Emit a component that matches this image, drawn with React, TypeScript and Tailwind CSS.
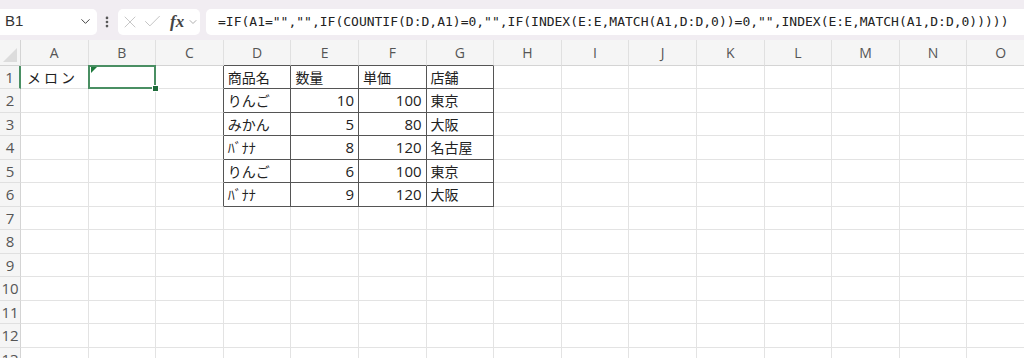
import React from 'react';
import { ChevronDown, EllipsisVertical, X, Check } from 'lucide-react';

const COLS = ['A', 'B', 'C', 'D', 'E', 'F', 'G', 'H', 'I', 'J', 'K', 'L', 'M', 'N', 'O'];
const ROWS = [1, 2, 3, 4, 5, 6, 7, 8, 9, 10, 11, 12, 13];

const FORMULA = '=IF(A1="","",IF(COUNTIF(D:D,A1)=0,"",IF(INDEX(E:E,MATCH(A1,D:D,0))=0,"",INDEX(E:E,MATCH(A1,D:D,0)))))';

// values keyed by "col+row"
const cells: Record<string, { v: string; right?: boolean }> = {
    A1: { v: 'メロン' },
    D1: { v: '商品名' }, E1: { v: '数量' }, F1: { v: '単価' }, G1: { v: '店舗' },
    D2: { v: 'りんご' }, E2: { v: '10', right: true }, F2: { v: '100', right: true }, G2: { v: '東京' },
    D3: { v: 'みかん' }, E3: { v: '5', right: true }, F3: { v: '80', right: true }, G3: { v: '大阪' },
    D4: { v: 'ﾊﾞﾅﾅ' }, E4: { v: '8', right: true }, F4: { v: '120', right: true }, G4: { v: '名古屋' },
    D5: { v: 'りんご' }, E5: { v: '6', right: true }, F5: { v: '100', right: true }, G5: { v: '東京' },
    D6: { v: 'ﾊﾞﾅﾅ' }, E6: { v: '9', right: true }, F6: { v: '120', right: true }, G6: { v: '大阪' },
};

const inTable = (c: string, r: number) => ['D', 'E', 'F', 'G'].includes(c) && r >= 1 && r <= 6;

export default function App() {
    return (
        <div className="w-[1024px] h-[358px] overflow-hidden bg-white text-[#222]" style={{ fontFamily: '"Noto Sans CJK JP", "Noto Sans", sans-serif' }}>
            {/* formula bar */}
            <div className="h-[40px] bg-[#f1edf2] flex items-center pt-[4px] pb-[1px]">
                <div className="w-[97px] h-[26px] bg-white rounded-r-[5px] flex items-center justify-between pl-[5px] pr-[4px]">
                    <span className="text-[15px] text-[#333]" style={{ fontFamily: '"Liberation Sans", sans-serif' }}>B1</span>
                    <ChevronDown className="w-[15px] h-[15px] text-[#444]" strokeWidth={1.6} />
                </div>
                <EllipsisVertical className="w-[14px] h-[14px] text-[#555] ml-[3px]" strokeWidth={2.6} />
                <div className="w-[82px] h-[26px] bg-white rounded-[5px] flex items-center pl-[2px] ml-[4px]">
                    <X className="w-[20px] h-[20px] text-[#c2c2c2]" strokeWidth={1.1} />
                    <Check className="w-[21px] h-[21px] text-[#c2c2c2] ml-[2px]" strokeWidth={1.1} />
                    <span className="italic font-bold text-[17px] text-[#444] leading-none ml-[7px]" style={{ fontFamily: '"Liberation Serif", serif' }}>fx</span>
                    <ChevronDown className="w-[12px] h-[12px] text-[#999] ml-[3px]" strokeWidth={1.6} />
                </div>
                <div className="flex-1 h-[26px] bg-white rounded-l-[5px] flex items-center pl-[12px] ml-[6px] overflow-hidden whitespace-nowrap">
                    <span className="text-[13px] text-[#222]" style={{ fontFamily: '"DejaVu Sans Mono", "Liberation Mono", monospace' }}>{FORMULA}</span>
                </div>
            </div>

            {/* grid */}
            <div className="grid grid-cols-[21px_repeat(15,67.6px)]">
                {/* header row */}
                <div className="h-[26px] bg-[#f5f5f5] border-b border-r border-[#d4d4d4] relative overflow-hidden">
                    <svg className="absolute right-[3px] bottom-[3px]" width="14" height="14" viewBox="0 0 14 14">
                        <polygon points="14,0 14,14 0,14" fill="#dcdcdc" />
                    </svg>
                </div>
                {COLS.map(c => (
                    <div
                        key={c}
                        className={`h-[26px] bg-[#f5f5f5] border-r border-[#e0e0e0] flex items-center justify-center text-[14px] text-[#555] ${inTable(c, 1) ? 'border-b border-b-[#555]' : 'border-b border-b-[#d4d4d4]'}`}
                        style={{ fontFamily: '"Open Sans", "Noto Sans", sans-serif' }}
                    >
                        {c}
                    </div>
                ))}

                {ROWS.map(r => (
                    <React.Fragment key={r}>
                        <div
                            className={`${r % 2 === 1 ? 'h-[23px]' : 'h-[24px]'} bg-[#f5f5f5] border-b border-[#e0e0e0] flex items-center justify-center text-[15px] text-[#555] ${r === 1 ? 'border-r-2 border-r-[#4a8f63]' : 'border-r border-r-[#d4d4d4]'}`}
                            style={{ fontFamily: '"Open Sans", "Noto Sans", sans-serif' }}
                        >
                            {r}
                        </div>
                        {COLS.map(c => {
                            const key = `${c}${r}`;
                            const cell = cells[key];
                            const t = inTable(c, r);
                            const leftOfTable = c === 'C' && r >= 1 && r <= 6;
                            const rb = t || leftOfTable ? 'border-r-[#555]' : 'border-r-[#e3e3e3]';
                            const bb = t ? 'border-b-[#555]' : 'border-b-[#e3e3e3]';
                            return (
                                <div
                                    key={key}
                                    className={`relative ${r % 2 === 1 ? 'h-[23px]' : 'h-[24px]'} border-r border-b ${rb} ${bb} flex items-center px-[4px] text-[14px] whitespace-nowrap ${cell?.right ? 'justify-end' : ''}`}
                                    style={cell?.right ? { fontFamily: '"Open Sans", "Noto Sans", sans-serif', fontSize: '15px' } : undefined}
                                >
                                    {cell && <span className={c === 'A' ? 'tracking-[3px] pl-[2px]' : ''}>{cell.v}</span>}
                                    {key === 'B1' && (
                                        <>
                                            <div className="absolute -left-[1px] -top-[1px] -right-[1px] -bottom-[1px] border-2 border-[#4a8f63] pointer-events-none" />
                                            <svg className="absolute left-[2px] top-[1px]" width="6" height="6" viewBox="0 0 6 6">
                                                <polygon points="0,0 6,0 0,6" fill="#1e7a3c" />
                                            </svg>
                                            <div className="absolute -right-[4px] -bottom-[4px] w-[7px] h-[7px] bg-[#1e6b3a] border border-white z-10" />
                                        </>
                                    )}
                                </div>
                            );
                        })}
                    </React.Fragment>
                ))}
            </div>
        </div>
    );
}
